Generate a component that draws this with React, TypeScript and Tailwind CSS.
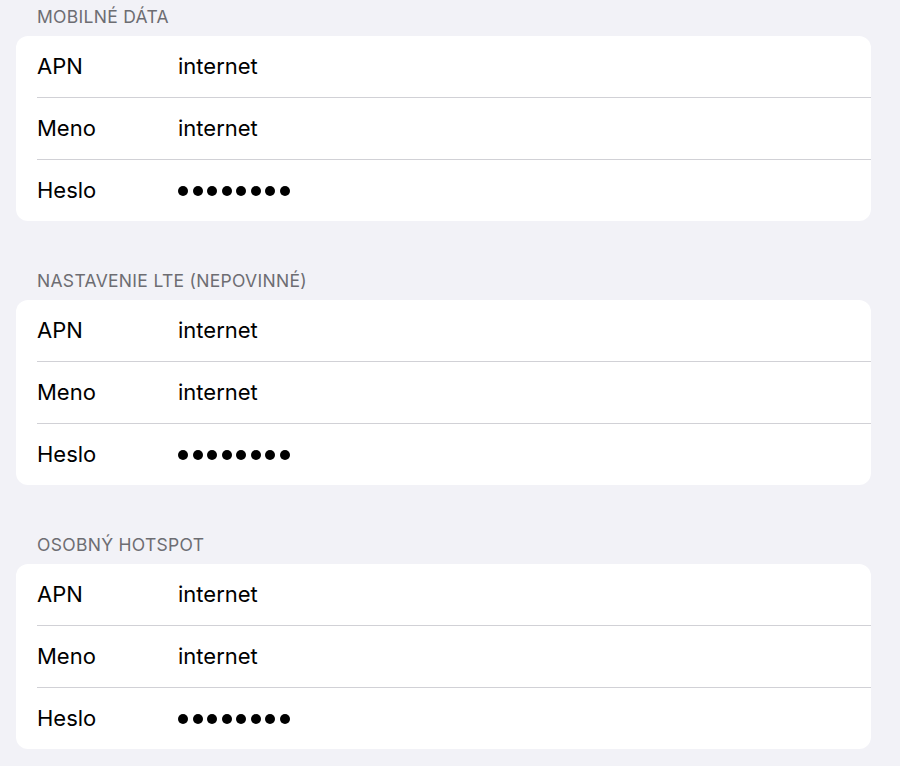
const sections = [
  { title: "Mobilné dáta" },
  { title: "Nastavenie LTE (nepovinné)" },
  { title: "Osobný hotspot" },
];

function Dots() {
  return (
    <div className="flex items-center gap-[4.5px]">
      {Array.from({ length: 8 }).map((_, i) => (
        <span key={i} className="block h-[10px] w-[10px] rounded-full bg-black" />
      ))}
    </div>
  );
}

function Row({ label, children, last }: { label: string; children: React.ReactNode; last?: boolean }) {
  return (
    <div className="pl-[21px]">
      <div className={"flex items-center " + (last ? "h-[61px]" : "h-[62px] border-b border-[#d1d1d6]")}>
        <div className="w-[141px] text-[22px] text-black">{label}</div>
        <div className="text-[22px] text-black">{children}</div>
      </div>
    </div>
  );
}

export default function App() {
  return (
    <div
      className="min-h-screen w-full bg-[#f2f2f7] pl-4 pr-[29px]"
      style={{ fontFamily: "Inter, 'Noto Sans', sans-serif" }}
    >
      {sections.map((s, i) => (
        <div key={s.title} className={i === 0 ? "" : "mt-[43px]"}>
          <div className="flex h-[36px] items-center pb-[2px] pl-[21px] text-[17.5px] uppercase tracking-[0.3px] text-[#6d6d72]">
            {s.title}
          </div>
          <div className="rounded-[12px] bg-white">
            <Row label="APN">internet</Row>
            <Row label="Meno">internet</Row>
            <Row label="Heslo" last>
              <Dots />
            </Row>
          </div>
        </div>
      ))}
    </div>
  );
}
